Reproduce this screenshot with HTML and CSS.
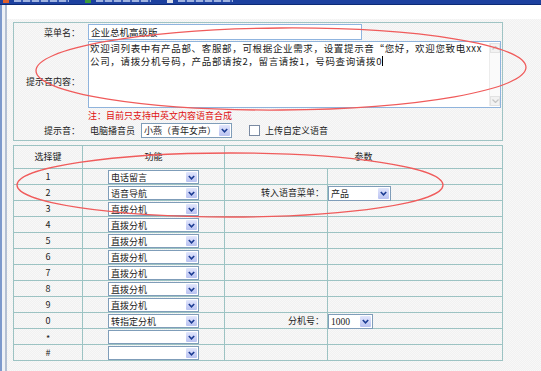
FILE: index.html
```html
<!DOCTYPE html>
<html lang="zh-CN">
<head>
<meta charset="utf-8">
<title>语音菜单设置</title>
<link rel="stylesheet" href="styles.css">
</head>
<body>
<div class="topbar">
  <div class="tab"><span class="tab-ico ico-a"></span><span class="tab-txt"></span></div>
  <div class="tab"><span class="tab-ico ico-b"></span><span class="tab-txt"></span></div>
  <div class="tab"><span class="tab-ico ico-c"></span><span class="tab-txt"></span></div>
</div>
<div class="main">
  <div class="leftstrip"></div>
  <div class="content">
    <div class="form-panel">
      <div class="lbl">菜单名：</div>
      <div class="cell-name"><div class="input">企业总机高级版</div></div>
      <div class="lbl lbl-tall">提示音内容：</div>
      <div class="cell-text">
        <div class="textarea">
          <div class="ta-text"><div class="ta-line">欢迎词列表中有产品部、客服部，可根据企业需求，设置提示音“您好，欢迎您致电xxx</div><div class="ta-line">公司，请拨分机号码，产品部请按2，留言请按1，号码查询请拨0<span class="caret"></span></div></div>
          <div class="ta-scroll">
            <span class="sb-btn"><svg width="7" height="4" viewBox="0 0 7 4"><path d="M0.5 3.5 L3.5 0.5 L6.5 3.5" fill="none" stroke="#c4c4c4" stroke-width="1.2"/></svg></span>
            <span class="sb-btn"><svg width="7" height="4" viewBox="0 0 7 4"><path d="M0.5 0.5 L3.5 3.5 L6.5 0.5" fill="none" stroke="#c4c4c4" stroke-width="1.2"/></svg></span>
          </div>
        </div>
      </div>
      <div class="note">注：目前只支持中英文内容语音合成</div>
      <div class="lbl">提示音：</div>
      <div class="voice">
        <span class="voice-lbl">电脑播音员</span>
        <div class="sel sel-voice"><span class="sel-text">小燕（青年女声）</span><span class="sel-btn"><svg width="7" height="5" viewBox="0 0 7 5"><path d="M0.8 1 L3.5 3.8 L6.2 1" fill="none" stroke="#1c3c94" stroke-width="1.6"/></svg></span></div>
        <span class="checkbox"></span>
        <span class="upload">上传自定义语音</span>
      </div>
    </div>

    <div class="keys">
      <div class="th">选择键</div>
      <div class="th">功能</div>
      <div class="th th-wide">参数</div>

      <div class="td num">1</div>
      <div class="td fn"><div class="sel sel-fn"><span class="sel-text">电话留言</span><span class="sel-btn"><svg width="7" height="5" viewBox="0 0 7 5"><path d="M0.8 1 L3.5 3.8 L6.2 1" fill="none" stroke="#1c3c94" stroke-width="1.6"/></svg></span></div></div>
      <div class="td plbl"></div>
      <div class="td pval"></div>

      <div class="td num">2</div>
      <div class="td fn"><div class="sel sel-fn"><span class="sel-text">语音导航</span><span class="sel-btn"><svg width="7" height="5" viewBox="0 0 7 5"><path d="M0.8 1 L3.5 3.8 L6.2 1" fill="none" stroke="#1c3c94" stroke-width="1.6"/></svg></span></div></div>
      <div class="td plbl">转入语音菜单：</div>
      <div class="td pval"><div class="sel sel-menu"><span class="sel-text">产品</span><span class="sel-btn"><svg width="7" height="5" viewBox="0 0 7 5"><path d="M0.8 1 L3.5 3.8 L6.2 1" fill="none" stroke="#1c3c94" stroke-width="1.6"/></svg></span></div></div>

      <div class="td num">3</div>
      <div class="td fn"><div class="sel sel-fn"><span class="sel-text">直拨分机</span><span class="sel-btn"><svg width="7" height="5" viewBox="0 0 7 5"><path d="M0.8 1 L3.5 3.8 L6.2 1" fill="none" stroke="#1c3c94" stroke-width="1.6"/></svg></span></div></div>
      <div class="td plbl"></div>
      <div class="td pval"></div>

      <div class="td num">4</div>
      <div class="td fn"><div class="sel sel-fn"><span class="sel-text">直拨分机</span><span class="sel-btn"><svg width="7" height="5" viewBox="0 0 7 5"><path d="M0.8 1 L3.5 3.8 L6.2 1" fill="none" stroke="#1c3c94" stroke-width="1.6"/></svg></span></div></div>
      <div class="td plbl"></div>
      <div class="td pval"></div>

      <div class="td num">5</div>
      <div class="td fn"><div class="sel sel-fn"><span class="sel-text">直拨分机</span><span class="sel-btn"><svg width="7" height="5" viewBox="0 0 7 5"><path d="M0.8 1 L3.5 3.8 L6.2 1" fill="none" stroke="#1c3c94" stroke-width="1.6"/></svg></span></div></div>
      <div class="td plbl"></div>
      <div class="td pval"></div>

      <div class="td num">6</div>
      <div class="td fn"><div class="sel sel-fn"><span class="sel-text">直拨分机</span><span class="sel-btn"><svg width="7" height="5" viewBox="0 0 7 5"><path d="M0.8 1 L3.5 3.8 L6.2 1" fill="none" stroke="#1c3c94" stroke-width="1.6"/></svg></span></div></div>
      <div class="td plbl"></div>
      <div class="td pval"></div>

      <div class="td num">7</div>
      <div class="td fn"><div class="sel sel-fn"><span class="sel-text">直拨分机</span><span class="sel-btn"><svg width="7" height="5" viewBox="0 0 7 5"><path d="M0.8 1 L3.5 3.8 L6.2 1" fill="none" stroke="#1c3c94" stroke-width="1.6"/></svg></span></div></div>
      <div class="td plbl"></div>
      <div class="td pval"></div>

      <div class="td num">8</div>
      <div class="td fn"><div class="sel sel-fn"><span class="sel-text">直拨分机</span><span class="sel-btn"><svg width="7" height="5" viewBox="0 0 7 5"><path d="M0.8 1 L3.5 3.8 L6.2 1" fill="none" stroke="#1c3c94" stroke-width="1.6"/></svg></span></div></div>
      <div class="td plbl"></div>
      <div class="td pval"></div>

      <div class="td num">9</div>
      <div class="td fn"><div class="sel sel-fn"><span class="sel-text">直拨分机</span><span class="sel-btn"><svg width="7" height="5" viewBox="0 0 7 5"><path d="M0.8 1 L3.5 3.8 L6.2 1" fill="none" stroke="#1c3c94" stroke-width="1.6"/></svg></span></div></div>
      <div class="td plbl"></div>
      <div class="td pval"></div>

      <div class="td num">0</div>
      <div class="td fn"><div class="sel sel-fn"><span class="sel-text">转指定分机</span><span class="sel-btn"><svg width="7" height="5" viewBox="0 0 7 5"><path d="M0.8 1 L3.5 3.8 L6.2 1" fill="none" stroke="#1c3c94" stroke-width="1.6"/></svg></span></div></div>
      <div class="td plbl">分机号：</div>
      <div class="td pval"><div class="sel sel-ext"><span class="sel-text serif">1000</span><span class="sel-btn"><svg width="7" height="5" viewBox="0 0 7 5"><path d="M0.8 1 L3.5 3.8 L6.2 1" fill="none" stroke="#1c3c94" stroke-width="1.6"/></svg></span></div></div>

      <div class="td num num-sym">*</div>
      <div class="td fn"><div class="sel sel-fn"><span class="sel-text"></span><span class="sel-btn"><svg width="7" height="5" viewBox="0 0 7 5"><path d="M0.8 1 L3.5 3.8 L6.2 1" fill="none" stroke="#1c3c94" stroke-width="1.6"/></svg></span></div></div>
      <div class="td plbl"></div>
      <div class="td pval"></div>

      <div class="td num">#</div>
      <div class="td fn"><div class="sel sel-fn"><span class="sel-text"></span><span class="sel-btn"><svg width="7" height="5" viewBox="0 0 7 5"><path d="M0.8 1 L3.5 3.8 L6.2 1" fill="none" stroke="#1c3c94" stroke-width="1.6"/></svg></span></div></div>
      <div class="td plbl"></div>
      <div class="td pval"></div>
    </div>
  </div>
</div>
<svg class="marks" width="541" height="371" viewBox="0 0 541 371">
  <ellipse cx="281" cy="69" rx="245" ry="41" transform="rotate(-0.4 281 69)" fill="none" stroke="#f05b5b" stroke-width="1.3"/>
  <ellipse cx="230" cy="185" rx="213" ry="32" fill="none" stroke="#f05b5b" stroke-width="1.3"/>
</svg>
</body>
</html>
```
FILE: styles.css
```css
* { box-sizing: border-box; }

html, body {
  margin: 0;
  padding: 0;
}

body {
  width: 541px;
  height: 371px;
  overflow: hidden;
  position: relative;
  font-family: "Noto Sans CJK SC", "Noto Sans", sans-serif;
  font-size: 9px;
  color: #222;
  background: #f5f5f5;
}

/* top tab bar (mostly cut off) */
.topbar {
  height: 5px;
  background: #1d419f;
  border-bottom: 1px solid #0c2a76;
  display: flex;
  overflow: hidden;
}
.tab {
  width: 78px;
  margin-left: 3px;
  display: flex;
  align-items: flex-start;
  gap: 5px;
}
.tab + .tab { margin-left: 4px; }
.tab-ico {
  width: 6px;
  height: 3px;
}
.ico-a { background: #e0602c; }
.ico-b { background: #3d9a3a; }
.ico-c { background: #d8dce8; }
.tab-txt {
  width: 55px;
  height: 2px;
  background: repeating-linear-gradient(to right, #9fb2e0 0 7px, #3a5cb2 7px 9px);
}

.main {
  display: flex;
  height: 366px;
}

.leftstrip {
  width: 7px;
  flex: none;
  background: linear-gradient(to right, #7d99cc 0 2px, #eef1f6 2px 5px, #b3bfd2 5px 7px);
}

.content {
  flex: 1;
  padding: 17px 0 0 6px;
  background:
    linear-gradient(#ffffff 0 14px, transparent 14px),
    repeating-conic-gradient(#f1f1f1 0 25%, #f8f8f8 0 50%) 0 0 / 2px 2px;
}

/* form panel */
.form-panel {
  width: 490px;
  border: 1px solid #9fc4c4;
  display: grid;
  grid-template-columns: 74px 1fr;
  grid-template-rows: 16px 68px 14px 16px;
  padding: 1px 0 2px 0;
}

.lbl {
  text-align: right;
  padding-right: 8px;
  display: flex;
  align-items: center;
  justify-content: flex-end;
  white-space: nowrap;
}
.lbl-tall { grid-row: span 2; }

.input {
  width: 274px;
  height: 16px;
  border: 1px solid #8fb4df;
  background: #fff;
  padding-left: 2px;
  font-size: 9.5px;
  line-height: 14px;
  white-space: nowrap;
}

.cell-text { padding-top: 1px; }

.textarea {
  width: 413px;
  height: 67px;
  border: 1px solid #8fb3dc;
  background: #fff;
  display: flex;
}
.ta-text {
  flex: 1;
  min-width: 0;
  padding-left: 1px;
  font-size: 9.5px;
  line-height: 12.5px;
  letter-spacing: 0.66px;
  overflow: hidden;
}
.ta-line {
  height: 12.5px;
  white-space: nowrap;
}
.caret {
  display: inline-block;
  width: 1px;
  height: 10px;
  background: #000;
  vertical-align: -1px;
}
.ta-scroll {
  width: 11px;
  flex: none;
  margin: 1px 0 1px 0;
  display: flex;
  flex-direction: column;
  justify-content: space-between;
  background: #fafafa;
  border-left: 1px solid #ececec;
}
.sb-btn {
  width: 10px;
  height: 10px;
  background: #f2f2f2;
  border: 1px solid #e2e2e2;
  display: flex;
  align-items: center;
  justify-content: center;
}

.note {
  grid-column: 2;
  color: #e01010;
  display: flex;
  align-items: center;
  white-space: nowrap;
}

.voice {
  display: flex;
  align-items: center;
  white-space: nowrap;
}
.voice-lbl { margin-left: 2px; }
.sel-voice {
  margin-left: 6px;
  width: 91px;
  height: 15px;
}
.checkbox {
  width: 11px;
  height: 11px;
  margin-left: 17px;
  border: 1px solid #7a8aa2;
  background: #fff;
}
.upload { margin-left: 5px; }

/* select lookalike */
.sel {
  display: flex;
  align-items: center;
  border: 1px solid #7f9db9;
  background: #fff;
  white-space: nowrap;
}
.sel-text {
  flex: 1;
  padding-left: 2px;
  overflow: hidden;
}
.serif {
  font-family: "Liberation Serif", serif;
  font-size: 9.5px;
}
.sel-btn {
  flex: none;
  width: 11px;
  height: calc(100% - 2px);
  margin-right: 1px;
  background: linear-gradient(#e2e6fc, #b9c2f1);
  border-radius: 1px;
  display: flex;
  align-items: center;
  justify-content: center;
}

/* keys table */
.keys {
  margin-top: 4px;
  width: 490px;
  display: grid;
  grid-template-columns: 69px 142px 103px 175px;
  grid-template-rows: 23px;
  grid-auto-rows: 16px;
  border-top: 1px solid #9cc3c3;
  border-left: 1px solid #9cc3c3;
}
.th, .td {
  border-right: 1px solid #9cc3c3;
  border-bottom: 1px solid #9cc3c3;
  white-space: nowrap;
}
.th {
  display: flex;
  align-items: center;
  justify-content: center;
  padding-bottom: 1px;
}
.th-wide { grid-column: span 2; }

.num {
  display: flex;
  align-items: center;
  justify-content: center;
}
.num-sym { padding-top: 3px; }
.fn {
  display: flex;
  justify-content: center;
  align-items: flex-start;
  padding-top: 1px;
}
.sel-fn {
  width: 91px;
  height: 14px;
}
.plbl {
  display: flex;
  align-items: center;
  justify-content: flex-end;
  padding-right: 3px;
}
.pval {
  display: flex;
  align-items: flex-start;
  padding-top: 1px;
}
.sel-menu {
  width: 63px;
  height: 15px;
}
.sel-ext {
  width: 45px;
  height: 15px;
}

/* red annotation marks drawn over the page */
.marks {
  position: absolute;
  left: 0;
  top: 0;
  pointer-events: none;
}
```
